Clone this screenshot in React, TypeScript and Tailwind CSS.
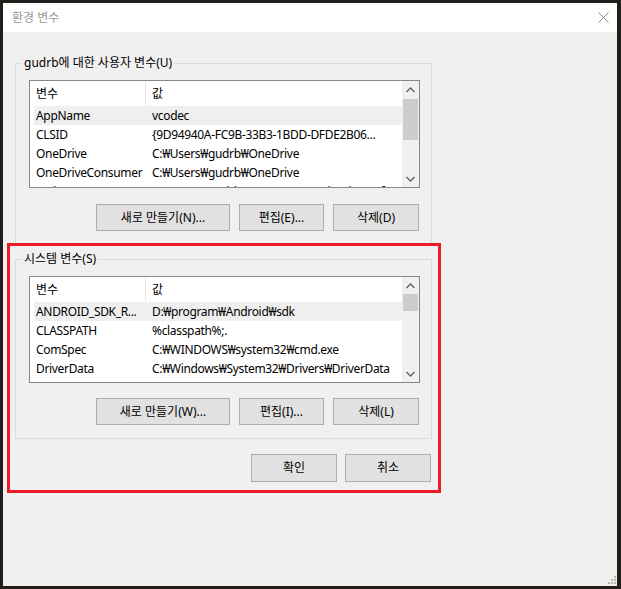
import React from "react";

type Row = [string, string];

const userVars: Row[] = [
  ["AppName", "vcodec"],
  ["CLSID", "{9D94940A-FC9B-33B3-1BDD-DFDE2B06..."],
  ["OneDrive", "C:₩Users₩gudrb₩OneDrive"],
  ["OneDriveConsumer", "C:₩Users₩gudrb₩OneDrive"],
  ["Path", "C:₩Users₩gudrb₩AppData₩Local₩Microsoft₩WindowsApps;"],
];

const systemVars: Row[] = [
  ["ANDROID_SDK_R...", "D:₩program₩Android₩sdk"],
  ["CLASSPATH", "%classpath%;."],
  ["ComSpec", "C:₩WINDOWS₩system32₩cmd.exe"],
  ["DriverData", "C:₩Windows₩System32₩Drivers₩DriverData"],
  ["NUMBER_OF_PROCESSORS", "8"],
];

function Chevron({ up }: { up?: boolean }) {
  return (
    <svg width="9" height="6" viewBox="0 0 9 6">
      <polyline
        points={up ? "0.5,5 4.5,1 8.5,5" : "0.5,1 4.5,5 8.5,1"}
        fill="none"
        stroke="#606060"
        strokeWidth="1.3"
      />
    </svg>
  );
}

function VarList({ rows, box, thumb }: { rows: Row[]; box: string; thumb: string }) {
  return (
    <div className={`flex w-[391px] border border-[#828790] bg-white ${box}`}>
      <div className="min-w-0 flex-1 overflow-hidden">
        <div className="flex h-[25px] items-center">
          <div className="my-[1px] flex h-[23px] w-[116px] items-center border-r border-[#e5e5e5] pl-[6px]">
            변수
          </div>
          <div className="pl-[6px]">값</div>
        </div>
        {rows.map(([name, value], i) => (
          <div
            key={name}
            className={`ml-[4px] flex h-[19px] items-center tracking-[-0.33px] ${i === 0 ? "bg-[#efefef]" : ""}`}
          >
            <div className="w-[112px] truncate pl-[2px]">{name}</div>
            <div className="min-w-0 flex-1 truncate pl-[6px]">{value}</div>
          </div>
        ))}
      </div>
      <div className="flex w-[17px] flex-col bg-[#f0f0f0]">
        <div className="flex h-[17px] items-center justify-center">
          <Chevron up />
        </div>
        <div className={`mx-[1px] bg-[#cdcdcd] ${thumb}`}></div>
        <div className="flex-1"></div>
        <div className="flex h-[17px] items-center justify-center">
          <Chevron />
        </div>
      </div>
    </div>
  );
}

function Btn({ w, h, label }: { w: string; h: string; label: string }) {
  return (
    <button className={`${w} ${h} border border-[#adadad] bg-[#e1e1e1] text-[12px] text-black`}>
      {label}
    </button>
  );
}

function Group({
  title,
  children,
  className,
}: {
  title: string;
  children: React.ReactNode;
  className?: string;
}) {
  return (
    <fieldset className={`w-[417px] border border-[#dcdcdc] ${className ?? ""}`}>
      <legend className="ml-[6px] px-[2px] text-[12px] leading-[16px]">{title}</legend>
      {children}
    </fieldset>
  );
}

export default function App() {
  return (
    <div className="h-[589px] w-[621px] overflow-hidden bg-[#221e1a] pl-[3px] pt-[3px] font-['Noto_Sans','Noto_Sans_CJK_KR',sans-serif] text-[12px] text-black">
      <div className="relative flex h-[583px] w-[614px] flex-col bg-[#f0f0f0]">
        <div className="flex h-[29px] items-center justify-between bg-white pl-[9px] pr-[8px]">
          <span className="text-[12px] text-[#999999]">환경 변수</span>
          <svg width="11" height="11" viewBox="0 0 11 11">
            <path d="M0.5 0.5 L10.5 10.5 M10.5 0.5 L0.5 10.5" stroke="#8a8a8a" strokeWidth="1" />
          </svg>
        </div>

        <div className="flex flex-col px-[12px] pt-[23px]">
          <Group title="gudrb에 대한 사용자 변수(U)">
            <div className="pb-[13px] pl-[13px] pt-[9px]">
              <VarList rows={userVars} box="h-[108px]" thumb="mt-[1px] h-[41px]" />
              <div className="mt-[16px] flex w-[391px] justify-end gap-[9px] pr-[1px]">
                <Btn w="w-[134px]" h="h-[27px]" label="새로 만들기(N)..." />
                <Btn w="w-[85px]" h="h-[27px]" label="편집(E)..." />
                <Btn w="w-[86px]" h="h-[27px]" label="삭제(D)" />
              </div>
            </div>
          </Group>

          <Group title="시스템 변수(S)" className="mt-[6px]">
            <div className="pb-[13px] pl-[13px] pt-[9px]">
              <VarList rows={systemVars} box="h-[107px]" thumb="h-[17px]" />
              <div className="mt-[15px] flex w-[391px] justify-end gap-[9px] pr-[1px]">
                <Btn w="w-[134px]" h="h-[27px]" label="새로 만들기(W)..." />
                <Btn w="w-[85px]" h="h-[27px]" label="편집(I)..." />
                <Btn w="w-[86px]" h="h-[27px]" label="삭제(L)" />
              </div>
            </div>
          </Group>

          <div className="mt-[15px] flex w-[417px] justify-end gap-[8px] pr-[1px]">
            <Btn w="w-[86px]" h="h-[28px]" label="확인" />
            <Btn w="w-[86px]" h="h-[28px]" label="취소" />
          </div>
        </div>

        {/* annotation box drawn over the system group */}
        <div className="pointer-events-none absolute left-[4px] top-[240px] h-[250px] w-[434px] border-[3px] border-[#ed1c24]"></div>

        <svg className="absolute bottom-[2px] right-[1px]" width="8" height="8" viewBox="0 0 8 8">
          <rect x="6" y="0" width="2" height="2" fill="#b4b4b4" />
          <rect x="3" y="3" width="2" height="2" fill="#b4b4b4" />
          <rect x="6" y="3" width="2" height="2" fill="#b4b4b4" />
          <rect x="0" y="6" width="2" height="2" fill="#b4b4b4" />
          <rect x="3" y="6" width="2" height="2" fill="#b4b4b4" />
          <rect x="6" y="6" width="2" height="2" fill="#b4b4b4" />
        </svg>
      </div>
    </div>
  );
}
